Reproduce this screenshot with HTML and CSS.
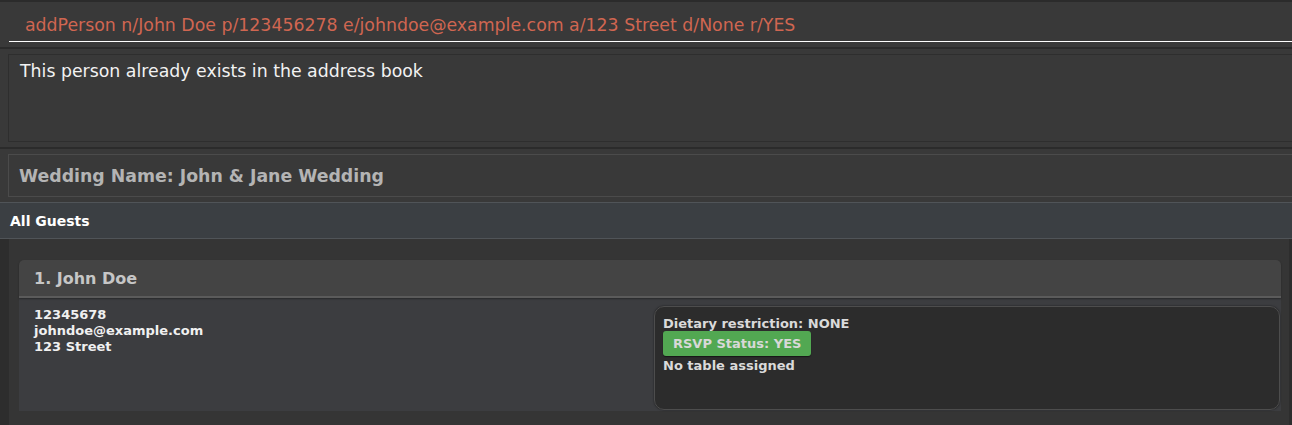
FILE: index.html
```html
<!DOCTYPE html>
<html>
<head>
<meta charset="utf-8">
<link rel="stylesheet" href="styles.css">
</head>
<body>
<div class="app">
  <div class="cmd-pane">
    <div class="cmd-field">addPerson n/John Doe p/123456278 e/johndoe@example.com a/123 Street d/None r/YES</div>
  </div>
  <div class="sep"></div>
  <div class="result-pane">
    <div class="result-box">This person already exists in the address book</div>
  </div>
  <div class="sep"></div>
  <div class="wedding-pane">
    <div class="wedding-box">Wedding Name: John &amp; Jane Wedding</div>
  </div>
  <div class="list-pane">
    <div class="list-title">All Guests</div>
    <div class="list-view">
      <div class="card">
        <div class="card-head">1. John Doe</div>
        <div class="card-body">
          <div class="info">
            <div>12345678</div>
            <div>johndoe@example.com</div>
            <div>123 Street</div>
          </div>
          <div class="side">
            <div>Dietary restriction: NONE</div>
            <div class="badge">RSVP Status: YES</div>
            <div>No table assigned</div>
          </div>
        </div>
      </div>
    </div>
  </div>
</div>
</body>
</html>
```

FILE: styles.css
```css
html, body {
  margin: 0;
  padding: 0;
  height: 100%;
  overflow: hidden;
}
body {
  background: #2d2d2d;
  font-family: "DejaVu Sans", Verdana, sans-serif;
}
.app {
  display: flex;
  flex-direction: column;
  height: 100%;
}
.cmd-pane {
  background: #393939;
  border-top: 2px solid #2b2b2b;
  padding-left: 9px;
  height: 47px;
  box-sizing: border-box;
  flex: 0 0 auto;
}
.cmd-field {
  height: 40px;
  box-sizing: border-box;
  padding: 12px 0 0 16px;
  line-height: 22px;
  font-size: 17.33px;
  color: #d06651;
  border-bottom: 1px solid #ffffff;
  white-space: nowrap;
}
.sep {
  height: 2px;
  flex: 0 0 auto;
  background: #2b2b2b;
}
.result-pane {
  background: #393939;
  padding: 5px 0 5px 8px;
  flex: 0 0 auto;
}
.result-box {
  height: 88px;
  box-sizing: border-box;
  margin-right: -4px;
  border: 1px solid #2e2e2e;
  padding: 5px 0 0 11px;
  line-height: 22px;
  font-size: 17.33px;
  color: #f2f2f2;
}
.wedding-pane {
  background: #393939;
  padding: 5px 0 5px 8px;
  flex: 0 0 auto;
}
.wedding-box {
  height: 43px;
  box-sizing: border-box;
  margin-right: -4px;
  border: 1px solid #4b4b4b;
  padding: 2px 0 0 10px;
  line-height: 39px;
  font-size: 17.33px;
  font-weight: bold;
  color: #b4b4b4;
}
.list-pane {
  flex: 1;
  display: flex;
  flex-direction: column;
  background: #2d2d2d;
}
.list-title {
  height: 37px;
  box-sizing: border-box;
  background: #3b3f43;
  border-top: 1px solid #505458;
  border-bottom: 1px solid #505458;
  padding: 2px 0 0 10px;
  line-height: 33px;
  font-size: 14px;
  font-weight: bold;
  color: #ffffff;
  flex: 0 0 auto;
}
.list-view {
  flex: 1;
  margin: 0 3px 0 9px;
  background: #353535;
  padding: 21px 8px 0 10px;
}
.card {
  display: flex;
  flex-direction: column;
}
.card-head {
  height: 38px;
  box-sizing: border-box;
  background: #444444;
  border-radius: 5px 5px 0 0;
  border-bottom: 2px solid #5b5b5b;
  padding: 2px 0 0 15px;
  line-height: 34px;
  font-size: 16px;
  font-weight: bold;
  color: #c6c6c6;
  box-shadow: 0 1px 2px rgba(0, 0, 0, 0.35);
  position: relative;
}
.card-body {
  display: flex;
  height: 113px;
  background: #3c3d40;
}
.info {
  flex: 1;
  padding: 9px 0 0 15px;
  font-size: 13px;
  line-height: 16px;
  font-weight: bold;
  color: #f0f0f0;
}
.side {
  flex: 0 0 626px;
  box-sizing: border-box;
  margin: 8px 1px 1px 0;
  background: #2c2c2c;
  border: 1px solid #4d4d4d;
  border-radius: 10px;
  box-shadow: 0 0 2px rgba(0, 0, 0, 0.6);
  padding: 9px 0 0 8px;
  font-size: 13px;
  line-height: 16px;
  font-weight: bold;
  color: #dadada;
}
.badge {
  display: inline-block;
  background: #52a852;
  color: #d8d8d8;
  border-radius: 3px;
  padding: 5px 10px 4px 10px;
  margin: -1px 0 2px 0;
  box-shadow: 0 1px 1px rgba(0, 0, 0, 0.5);
}
```
